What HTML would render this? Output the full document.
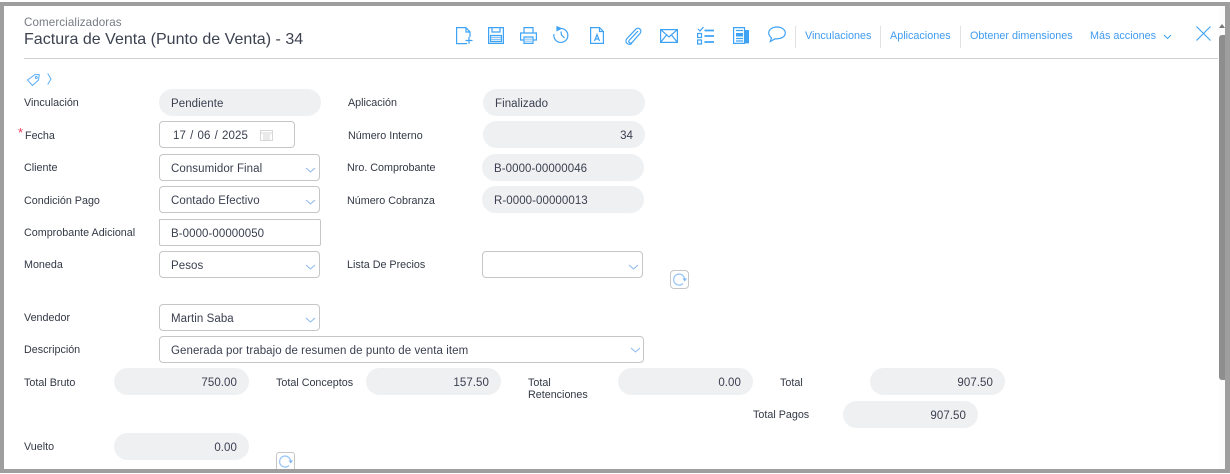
<!DOCTYPE html>
<html><head><meta charset="utf-8"><style>
html,body{margin:0;padding:0;width:1230px;height:474px;overflow:hidden;background:#fff}
body{position:relative;font-family:"Liberation Sans",sans-serif;color:#333a4d}
div,span{position:absolute;box-sizing:border-box;white-space:nowrap}
.b{background:#9e9e9e}
.l{font-size:10.75px;line-height:16px;color:#333845}
.p{background:#eff0f2;border-radius:14px;height:27px;font-size:11.5px;line-height:30px;padding:0 12px;color:#3a3f4f;letter-spacing:.07px}
.r{text-align:right}
.i{background:#fff;border:1px solid #c6c6c6;border-radius:4px;height:27px;font-size:11.5px;line-height:28px;padding:0 11px;color:#3a3f4f;letter-spacing:.07px}
.a{color:#3f9bf0;font-size:10.8px;line-height:14px}
.s{width:1px;background:#e2e2e2}
svg{position:absolute;overflow:visible}
.ic{fill:none;stroke:#3ea2f5;stroke-width:1.2}
</style></head><body>
<div class="b" style="left:0;top:2px;width:1230px;height:4px"></div>
<div class="b" style="left:0;top:2px;width:4px;height:471px"></div>
<div class="b" style="left:1225px;top:2px;width:5px;height:471px"></div>
<div class="b" style="left:0;top:469px;width:1230px;height:4px"></div>
<div style="left:1219px;top:6px;width:6px;height:463px;background:#fcfcfc"></div>
<div style="left:1219px;top:35px;width:6px;height:345px;background:#8e8e8e;border-radius:3px 0 0 3px"></div>
<svg style="left:1219px;top:23px" width="6" height="6"><path d="M0 5L3 1L6 5Z" fill="#777"/></svg>

<div style="left:24px;top:16px;font-size:11.6px;line-height:14px;color:#777b84;letter-spacing:.1px">Comercializadoras</div>
<div style="left:24px;top:30px;font-size:16px;line-height:20px;color:#3c4250;letter-spacing:.02px">Factura de Venta (Punto de Venta) - 34</div>
<div style="left:24px;top:58px;width:1194px;height:1px;background:#cfcfd4"></div>

<svg class="ic" style="left:456px;top:27px" width="17" height="18"><path d="M10 .6H.6V16.600H11M10 .6L14 5V10M10 .6V5H14"/><path d="M9.500 13.500H16.500M13 10V16.800"/></svg>
<svg class="ic" style="left:488px;top:27px" width="16" height="17"><path d="M.6.6H15.4V16.4H.6Z"/><path d="M4 .6V5H12V.6M2.5 8.5H13.5V14.5H2.5Z" /><path d="M3 10.5H13M3 12.5H13" stroke="#8cc6f8"/></svg>
<svg class="ic" style="left:520px;top:27px" width="17" height="17"><path d="M4 6V.6H13V6M4 13H.6V6H16.4V13H13"/><path d="M4 10H13V16.4H4Z"/><path d="M5 12.2H12M5 14.2H12" stroke="#8cc6f8"/></svg>
<svg class="ic" style="left:553px;top:25px" width="17" height="19"><path d="M7 3.5A7 7 0 1 1 1 9"/><path d="M8 3.5L4 1.8V5.5Z" fill="#3ea2f5"/><path d="M8 6.5L8.5 10L11.5 13"/></svg>
<svg class="ic" style="left:590px;top:27px" width="14" height="17"><path d="M.6.6H9.5L13.4 4.5V16.4H.6ZM9.5.6V4.5H13.4"/><path d="M4.5 14L7 7.5L9.5 14M5.4 12H8.6"/></svg>
<svg class="ic" style="left:624px;top:26px" width="18" height="19"><path d="M14 5L5.5 14C3.5 16 6 18 8 16.5L16 7.5C18.5 4.5 15 .5 12 3L3 12.5C0 16 4 20 8 17.5"/></svg>
<svg class="ic" style="left:660px;top:29px" width="18" height="14"><path d="M.6.6H17.4V13.4H.6ZM.6.6L9 8L17.4.6M.6 13.4L6.5 6M17.4 13.4L11.5 6"/></svg>
<svg class="ic" style="left:697px;top:26px" width="17" height="19"><path d="M1 3L3 5L6.5 1" /><path d="M.6 7.5H4.5V11.5H.6ZM.6 14H4.5V18H.6Z"/><path d="M7.5 4.5H17M7.5 10H17M7.5 16H17" stroke-width="1.8"/></svg>
<svg class="ic" style="left:733px;top:27px" width="16" height="17"><path d="M.6.6H11.5V16.4H.6Z"/><rect x="3" y="6" width="7" height="3.5" fill="#3ea2f5" stroke="none"/><path d="M3 3.5H10M3 11.5H10M3 14H10"/><rect x="12" y="3" width="4" height="13.4" fill="#3ea2f5" stroke="none"/></svg>
<svg class="ic" style="left:768px;top:26px" width="18" height="18"><path d="M9 1C4.500 1 .7 3.500.7 7C.7 9.500 2.500 11 3.500 11.800L2.300 15.500L7 12.800C12.500 13.300 17.300 11 17.300 7C17.300 3.500 13.500 1 9 1Z"/></svg>

<div class="s" style="left:795px;top:26px;height:22px"></div>
<div class="a" style="left:805px;top:29px">Vinculaciones</div>
<div class="s" style="left:880px;top:26px;height:22px"></div>
<div class="a" style="left:890px;top:29px">Aplicaciones</div>
<div class="s" style="left:960px;top:26px;height:22px"></div>
<div class="a" style="left:970px;top:29px">Obtener dimensiones</div>
<div class="a" style="left:1090px;top:29px">Más acciones</div>
<svg class="ic" style="left:1163px;top:34px;stroke-width:1" width="9" height="6"><path d="M1 1L4.500 4.500L8 1"/></svg>
<svg class="ic" style="left:1196px;top:26px;stroke-width:1.100" width="15" height="15"><path d="M.5.5L14.500 14.500M14.500.5L.5 14.500"/></svg>

<svg fill="none" stroke="#5aaef5" stroke-width="1" style="left:27px;top:74px" width="13" height="12"><path d="M.5 6L8 .6H12.300L11.500 6L5.500 11.500Z"/><circle cx="9.300" cy="3.500" r="1"/></svg>
<svg fill="none" stroke="#5aaef5" stroke-width="1" style="left:47px;top:73px" width="5" height="12"><path d="M.7.5L4 6L.7 11.500"/></svg>

<div class="l" style="left:24px;top:95px">Vinculación</div>
<div class="p" style="left:159px;top:89px;width:162px">Pendiente</div>
<div class="l" style="left:348px;top:95px">Aplicación</div>
<div class="p" style="left:483px;top:89px;width:162px">Finalizado</div>

<div style="left:18px;top:127px;color:#ee3a5c;font-size:13px;line-height:12px">*</div>
<div class="l" style="left:25px;top:128px">Fecha</div>
<div class="i" style="left:159px;top:121px;width:136px;padding-left:13px;word-spacing:.9px">17 / 06 / 2025</div>
<svg style="left:260px;top:129px" width="13" height="12" fill="none" stroke="#d6d6d6"><path d="M.5 1.500H12.500V11.500H.5ZM.5 4H12.500M3 6H10M3 8H10M3 10H10"/></svg>
<div class="l" style="left:348px;top:128px">Número Interno</div>
<div class="p r" style="left:483px;top:121px;width:162px">34</div>

<div class="l" style="left:24px;top:160px">Cliente</div>
<div class="i" style="left:159px;top:154px;width:161px">Consumidor Final</div>
<div class="l" style="left:347px;top:160px">Nro. Comprobante</div>
<div class="p" style="left:482px;top:154px;width:162px">B-0000-00000046</div>

<div class="l" style="left:24px;top:193px">Condición Pago</div>
<div class="i" style="left:159px;top:186px;width:161px">Contado Efectivo</div>
<div class="l" style="left:347px;top:193px">Número Cobranza</div>
<div class="p" style="left:482px;top:186px;width:162px">R-0000-00000013</div>

<div class="l" style="left:24px;top:225px">Comprobante Adicional</div>
<div class="i" style="left:159px;top:219px;width:162px;border-radius:0 2px 2px 2px">B-0000-00000050</div>

<div class="l" style="left:24px;top:257px">Moneda</div>
<div class="i" style="left:159px;top:251px;width:161px">Pesos</div>
<div class="l" style="left:347px;top:257px">Lista De Precios</div>
<div class="i" style="left:482px;top:251px;width:161px"></div>
<div class="i" style="left:670px;top:270px;width:19px;height:19px;padding:0"></div>
<svg style="left:672px;top:273px" width="15" height="14" fill="none" stroke="#9cc8f8" stroke-width="1.300"><path d="M12.500 5.500A5.500 5.500 0 1 0 11 10.500"/><path d="M10.500 5.500H15L12.700 8.500Z" fill="#7fb6f2" stroke="none"/></svg>

<div class="l" style="left:24px;top:310px">Vendedor</div>
<div class="i" style="left:159px;top:304px;width:161px">Martin Saba</div>
<div class="l" style="left:24px;top:342px">Descripción</div>
<div class="i" style="left:159px;top:336px;width:485px">Generada por trabajo de resumen de punto de venta item</div>

<svg fill="none" stroke="#8ab8ee" stroke-width="1" style="left:0;top:0" width="1230" height="474"><path d="M306 168L310.500 172L315 168M306 200L310.500 204L315 200M306 265L310.500 269L315 265M306 318L310.500 322L315 318M629 265L633.500 269L638 265M631 348L635.500 352L640 348"/></svg>

<div class="l" style="left:24px;top:375px">Total Bruto</div>
<div class="p r" style="left:114px;top:368px;width:135px">750.00</div>
<div class="l" style="left:276px;top:375px">Total Conceptos</div>
<div class="p r" style="left:366px;top:368px;width:135px">157.50</div>
<div class="l" style="left:528px;top:377px;line-height:12px">Total<br>Retenciones</div>
<div class="p r" style="left:618px;top:368px;width:135px">0.00</div>
<div class="l" style="left:780px;top:375px">Total</div>
<div class="p r" style="left:870px;top:368px;width:135px">907.50</div>
<div class="l" style="left:753px;top:407px">Total Pagos</div>
<div class="p r" style="left:843px;top:401px;width:135px">907.50</div>
<div class="l" style="left:24px;top:439px">Vuelto</div>
<div class="p r" style="left:114px;top:433px;width:135px">0.00</div>
<div class="i" style="left:276px;top:452px;width:19px;height:17px;padding:0;border-bottom:0;border-radius:3px 3px 0 0"></div>
<svg style="left:278px;top:455px" width="15" height="14" fill="none" stroke="#9cc8f8" stroke-width="1.300"><path d="M12.500 5.500A5.500 5.500 0 1 0 11 10.500"/><path d="M10.500 5.500H15L12.700 8.500Z" fill="#7fb6f2" stroke="none"/></svg>
</body></html>
